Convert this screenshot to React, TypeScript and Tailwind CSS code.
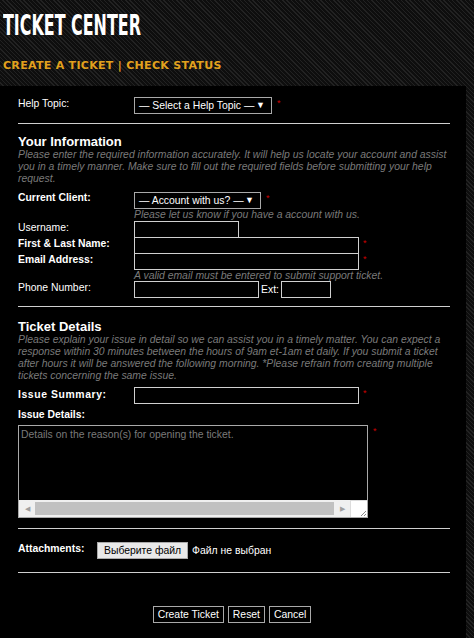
function Star({ className = '' }: { className?: string }) {
  return <span className={'text-[9px] leading-[12px] text-[#cc0000] ' + className}>*</span>
}

function FakeSelect({ label, width }: { label: string; width: string }) {
  return (
    <div
      className={
        'flex h-[17px] items-center justify-between whitespace-nowrap border border-[#a9a9a9] bg-black pl-[4px] pr-[6px] text-[10.4px] leading-[15px] text-white ' +
        width
      }
    >
      <span>{label}</span>
      <span className="text-[9px]">▼</span>
    </div>
  )
}

function Field({ width }: { width: string }) {
  return (
    <input
      type="text"
      className={'h-[17px] border border-[#d0d0d0] bg-black px-1 text-[10.4px] text-white outline-none ' + width}
    />
  )
}

function App() {
  return (
    <div
      className="min-h-screen bg-[#121212] bg-[repeating-linear-gradient(45deg,#0e0e0e_0px,#0e0e0e_2px,#222222_2px,#222222_3px)] text-white"
      style={{ fontFamily: '"Liberation Sans", Arial, sans-serif' }}
    >
      <header className="px-[3px] pt-[11px]">
        <h1 className="inline-block origin-left scale-x-[0.61] text-[29px] font-bold leading-[28px] text-white [font-family:'Liberation_Sans_Narrow','DejaVu_Sans_Condensed',sans-serif]">
          TICKET CENTER
        </h1>
        <nav className="mt-[17px] text-[11px] font-bold leading-[14px] tracking-[0.3px] text-[#e2a11d] [font-family:'DejaVu_Sans',Verdana,sans-serif]">
          CREATE A TICKET | CHECK STATUS
        </nav>
      </header>

      <main className="mt-[13px] w-[466px] bg-black pb-10 pl-[18px] pr-[16px] pt-[11px] text-[10.4px] leading-[12px]">
        <div className="flex items-start">
          <label className="w-[116px] pt-[1px]">Help Topic:</label>
          <FakeSelect label="— Select a Help Topic —" width="w-[138px]" />
          <Star className="ml-[5px]" />
        </div>

        <hr className="mt-[9px] border-t border-[#cfcfcf]" />

        <h2 className="mt-[10px] text-[13px] font-bold leading-[15px]">Your Information</h2>
        <p className="italic leading-[12px] text-[#7a7a7a]">
          Please enter the required information accurately. It will help us locate your account and assist
          you in a timely manner. Make sure to fill out the required fields before submitting your help
          request.
        </p>

        <div className="mt-[7px] flex items-start">
          <label className="w-[116px] font-bold">Current Client:</label>
          <FakeSelect label="— Account with us? —" width="w-[127px]" />
          <Star className="ml-[5px]" />
        </div>
        <div className="ml-[116px] italic leading-[12px] text-[#7a7a7a]">
          Please let us know if you have a account with us.
        </div>
        <div className="flex h-[16px] items-start">
          <label className="w-[116px] pt-[1px]">Username:</label>
          <Field width="w-[105px]" />
        </div>
        <div className="flex h-[16px] items-start">
          <label className="w-[116px] pt-[1px] font-bold">First &amp; Last Name:</label>
          <Field width="w-[225px]" />
          <Star className="ml-[4px]" />
        </div>
        <div className="flex h-[16px] items-start">
          <label className="w-[116px] pt-[1px] font-bold">Email Address:</label>
          <Field width="w-[225px]" />
          <Star className="ml-[4px]" />
        </div>
        <div className="ml-[116px] mt-[1px] italic leading-[11px] text-[#7a7a7a]">
          A valid email must be entered to submit support ticket.
        </div>
        <div className="flex items-start">
          <label className="w-[116px] pt-[1px]">Phone Number:</label>
          <Field width="w-[125px]" />
          <span className="ml-[2px] pt-[3px]">Ext:</span>
          <Field width="w-[50px] ml-[2px]" />
        </div>

        <hr className="mt-[8px] border-t border-[#cfcfcf]" />

        <h2 className="mt-[12px] text-[13px] font-bold leading-[15px]">Ticket Details</h2>
        <p className="italic leading-[12px] text-[#7a7a7a]">
          Please explain your issue in detail so we can assist you in a timely matter. You can expect a
          response within 30 minutes between the hours of 9am et-1am et daily. If you submit a ticket
          after hours it will be answered the following morning. *Please refrain from creating multiple
          tickets concerning the same issue.
        </p>

        <div className="mt-[5px] flex items-start">
          <label className="w-[116px] pt-[2px] font-bold tracking-[0.6px]">Issue Summary:</label>
          <Field width="w-[225px]" />
          <Star className="ml-[4px]" />
        </div>
        <div className="mt-[5px] font-bold leading-[12px]">Issue Details:</div>
        <div className="mt-[4px] flex items-start">
          <div className="flex h-[93px] w-[350px] flex-col border border-[#a9a9a9] bg-black">
            <textarea
              placeholder="Details on the reason(s) for opening the ticket."
              className="flex-1 resize-none bg-black px-[2px] pt-[3px] text-[10.4px] leading-[12px] text-white outline-none placeholder:text-[#7a7a7a]"
            />
            <div className="flex h-[17px] items-stretch bg-[#f0f0f0]">
              <div className="flex w-[16px] items-center justify-center text-[7px] text-[#a0a0a0]">◀</div>
              <div className="my-[2px] flex-1 bg-[#c1c1c1]" />
              <div className="flex w-[16px] items-center justify-center text-[7px] text-[#a0a0a0]">▶</div>
              <div className="relative w-[17px] border-l border-t border-[#dcdcdc] bg-white">
                <svg viewBox="0 0 17 17" className="absolute inset-0 h-[17px] w-[17px]">
                  <path d="M15 10 L10 15 M15 13 L13 15" stroke="#8a8a8a" strokeWidth="1" />
                </svg>
              </div>
            </div>
          </div>
          <Star className="ml-[5px]" />
        </div>

        <hr className="mt-[10px] border-t border-[#cfcfcf]" />

        <div className="mt-[13px] flex items-start">
          <label className="w-[79px] pt-[1px] font-bold">Attachments:</label>
          <div className="flex items-center">
            <button className="h-[17px] border border-[#a9a9a9] bg-[#e9e9e9] px-[6px] text-[10.4px] leading-[15px] text-black">
              Выберите файл
            </button>
            <span className="ml-[4px]">Файл не выбран</span>
          </div>
        </div>

        <hr className="mt-[13px] border-t border-[#cfcfcf]" />

        <div className="mt-[33px] flex justify-center gap-[4px] pr-[4px]">
          <button className="h-[17px] border border-[#a9a9a9] bg-black px-[4px] text-[10.4px] leading-[15px] text-white">
            Create Ticket
          </button>
          <button className="h-[17px] border border-[#a9a9a9] bg-black px-[4px] text-[10.4px] leading-[15px] text-white">
            Reset
          </button>
          <button className="h-[17px] border border-[#a9a9a9] bg-black px-[4px] text-[10.4px] leading-[15px] text-white">
            Cancel
          </button>
        </div>
      </main>
    </div>
  )
}

export default App
